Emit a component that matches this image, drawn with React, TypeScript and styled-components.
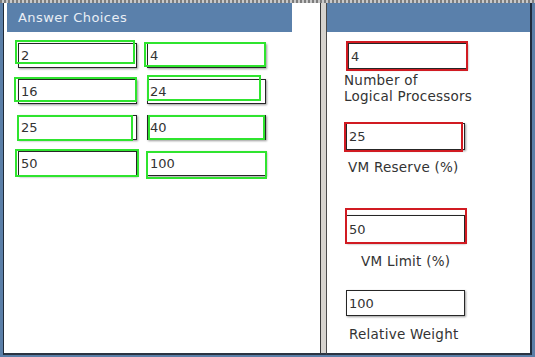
import React from "react";
import styled, { createGlobalStyle } from "styled-components";

const GlobalStyle = createGlobalStyle`
  html, body {
    margin: 0;
    padding: 0;
    background: #ffffff;
  }
  * {
    box-sizing: border-box;
  }
`;

type Box = { l: number; t: number; r: number; b: number };

const choices: { value: string; box: Box }[] = [
  { value: "2", box: { l: -3, t: -3, r: 2, b: 4 } },
  { value: "4", box: { l: -3, t: -1, r: 0, b: 1 } },
  { value: "16", box: { l: -4, t: -2, r: 0, b: 2 } },
  { value: "24", box: { l: 0, t: -4, r: 5, b: 3 } },
  { value: "25", box: { l: -1, t: 0, r: 4, b: -1 } },
  { value: "40", box: { l: 1, t: 0, r: 1, b: 0 } },
  { value: "50", box: { l: -3, t: -2, r: -2, b: -1 } },
  { value: "100", box: { l: -1, t: 0, r: -1, b: -3 } },
];

function App() {
  return (
    <>
      <GlobalStyle />
      <Frame>
        <LeftPanel>
          <Header>Answer Choices</Header>
          <ChoiceGrid>
            {choices.map((c) => (
              <Slot key={c.value}>
                <ValueBox $h={25}>{c.value}</ValueBox>
                <Outline $color="#2fe42f" $box={c.box} />
              </Slot>
            ))}
          </ChoiceGrid>
        </LeftPanel>
        <Divider />
        <RightPanel>
          <Header />
          <Slot $mt={11} $ml={21}>
            <ValueBox $h={26}>4</ValueBox>
            <Outline $color="#d11b22" $box={{ l: -2, t: -2, r: -1, b: -2 }} />
          </Slot>
          <Label $mt={3} $indent={17}>
            Number of
            <br />
            Logical Processors
          </Label>
          <Slot $mt={19} $ml={19}>
            <ValueBox $h={27}>25</ValueBox>
            <Outline $color="#d11b22" $box={{ l: -2, t: -1, r: 2, b: -2 }} />
          </Slot>
          <Label $mt={9} $indent={21}>VM Reserve (%)</Label>
          <Slot $mt={40} $ml={19}>
            <ValueBox $h={28}>50</ValueBox>
            <Outline $color="#d11b22" $box={{ l: -1, t: -7, r: -2, b: -1 }} />
          </Slot>
          <Label $mt={10} $indent={34}>VM Limit (%)</Label>
          <Slot $mt={21} $ml={19}>
            <ValueBox $h={26}>100</ValueBox>
          </Slot>
          <Label $mt={10} $indent={22}>Relative Weight</Label>
        </RightPanel>
      </Frame>
    </>
  );
}

const Frame = styled.div`
  width: 535px;
  height: 357px;
  display: flex;
  padding: 3px 3px 2px 3px;
  background:
    repeating-linear-gradient(90deg, #7d7d7d 0 2px, #c9c9c9 2px 4px) top / 100% 3px no-repeat,
    #5b7fa8;
  font-family: "DejaVu Sans", Verdana, sans-serif;
`;

const LeftPanel = styled.div`
  width: 317px;
  height: 100%;
  background: #ffffff;
  border-left: 1px solid #1f2a38;
  border-bottom: 2px solid #2b3442;
  padding-left: 3px;
`;

const Divider = styled.div`
  width: 7px;
  height: 100%;
  background: #d6d3ce;
  border-left: 1px solid #3a3a3a;
  border-right: 1px solid #4a4a4a;
  border-bottom: 2px solid #2b3442;
`;

const RightPanel = styled.div`
  flex: 1;
  height: 100%;
  background: #ffffff;
  border-right: 2px solid #1f2b3c;
  border-bottom: 2px solid #2b3442;
  display: flex;
  flex-direction: column;
`;

const Header = styled.div`
  height: 29px;
  width: 100%;
  max-width: 285px;
  background: #5a80ab;
  color: #e9eef5;
  font-size: 13px;
  letter-spacing: 0.45px;
  line-height: 29px;
  padding-left: 11px;
`;

const ChoiceGrid = styled.div`
  display: grid;
  grid-template-columns: 119px 119px;
  column-gap: 10px;
  row-gap: 11px;
  padding: 11px 0 0 11px;
`;

const Slot = styled.div<{ $mt?: number; $ml?: number }>`
  position: relative;
  width: 119px;
  margin-top: ${(p) => p.$mt ?? 0}px;
  margin-left: ${(p) => p.$ml ?? 0}px;
`;

const ValueBox = styled.div<{ $h: number }>`
  height: ${(p) => p.$h}px;
  border: 1px solid #262626;
  background: #ffffff;
  box-shadow: 1px 1px 2px rgba(0, 0, 0, 0.4);
  color: #333333;
  font-size: 13px;
  padding-left: 2px;
  display: flex;
  align-items: center;
`;

const Outline = styled.div<{ $color: string; $box: Box }>`
  position: absolute;
  left: ${(p) => p.$box.l}px;
  top: ${(p) => p.$box.t}px;
  right: ${(p) => p.$box.r}px;
  bottom: ${(p) => p.$box.b}px;
  border: 2px solid ${(p) => p.$color};
  pointer-events: none;
`;

const Label = styled.div<{ $mt: number; $indent: number }>`
  margin-top: ${(p) => p.$mt}px;
  padding-left: ${(p) => p.$indent}px;
  font-size: 13.5px;
  letter-spacing: 0.25px;
  line-height: 16px;
  color: #333333;
`;

export default App;
